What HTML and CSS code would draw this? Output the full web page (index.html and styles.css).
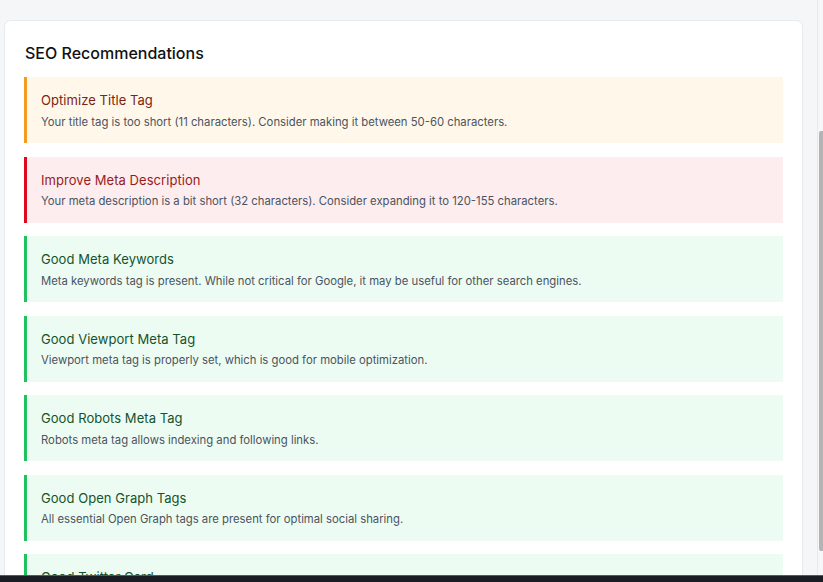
FILE: index.html
```html
<!DOCTYPE html>
<html lang="en">
<head>
<meta charset="utf-8">
<title>SEO Recommendations</title>
<link rel="stylesheet" href="styles.css">
</head>
<body>
<div class="viewport">
  <main class="content">
    <section class="card">
      <h2 class="card-title">SEO Recommendations</h2>
      <div class="list">
        <div class="rec rec-warn">
          <div class="rec-title">Optimize Title Tag</div>
          <div class="rec-text">Your title tag is too short (11 characters). Consider making it between 50-60 characters.</div>
        </div>
        <div class="rec rec-bad">
          <div class="rec-title">Improve Meta Description</div>
          <div class="rec-text">Your meta description is a bit short (32 characters). Consider expanding it to 120-155 characters.</div>
        </div>
        <div class="rec rec-good">
          <div class="rec-title">Good Meta Keywords</div>
          <div class="rec-text">Meta keywords tag is present. While not critical for Google, it may be useful for other search engines.</div>
        </div>
        <div class="rec rec-good">
          <div class="rec-title">Good Viewport Meta Tag</div>
          <div class="rec-text">Viewport meta tag is properly set, which is good for mobile optimization.</div>
        </div>
        <div class="rec rec-good">
          <div class="rec-title">Good Robots Meta Tag</div>
          <div class="rec-text">Robots meta tag allows indexing and following links.</div>
        </div>
        <div class="rec rec-good">
          <div class="rec-title">Good Open Graph Tags</div>
          <div class="rec-text">All essential Open Graph tags are present for optimal social sharing.</div>
        </div>
        <div class="rec rec-good">
          <div class="rec-title">Good Twitter Card</div>
          <div class="rec-text">Twitter Card tags are present for better sharing on Twitter.</div>
        </div>
      </div>
    </section>
  </main>
  <div class="scrollbar"><div class="thumb"></div></div>
</div>
<div class="taskbar"></div>
</body>
</html>
```
FILE: styles.css
```css
* { box-sizing: border-box; }
html, body { margin: 0; height: 100%; overflow: hidden; }
body {
  background: #f4f6f8;
  font-family: Inter, "Noto Sans", sans-serif;
  color: #111;
}
.viewport {
  display: flex;
  height: 582px;
}
.content {
  flex: 1;
  padding: 20px 14px 0 4px;
  overflow: hidden;
}
.card {
  background: #fff;
  border: 1px solid #e8eaed;
  border-radius: 7px;
  padding: 0 19px 20px 19px;
}
.card-title {
  margin: 0;
  padding: 22px 0 14px 1px;
  font-size: 16px;
  line-height: 20px;
  font-weight: 500;
  color: #111;
}
.list {
  display: flex;
  flex-direction: column;
  gap: 13.5px;
}
.rec {
  border-left: 3px solid;
  padding: 13px 14px 12px 14px;
  height: 66px;
}
.rec-title {
  font-size: 13px;
  line-height: 20px;
  font-weight: 400;
  letter-spacing: 0.05px;
}
.rec-text {
  margin-top: 2.5px;
  font-size: 11.3px;
  line-height: 18px;
  color: #4b5360;
}
.rec-warn { background: #fff8ea; border-color: #f29b1e; }
.rec-warn .rec-title { color: #7c2410; }
.rec-bad { background: #fdedee; border-color: #dc0a1e; }
.rec-bad .rec-title { color: #981b1b; }
.rec-good { background: #edfcf2; border-color: #1fc25c; }
.rec-good .rec-title { color: #14532d; }
.scrollbar {
  width: 6px;
  border-left: 1px solid #e6e8ea;
  background: #f6f7f8;
  padding-top: 131px;
  display: flex;
  justify-content: flex-end;
}
.thumb {
  width: 4px;
  height: 420px;
  background: #b4b4b4;
  border-radius: 2px 0 0 2px;
}
.taskbar {
  position: fixed;
  left: 0;
  right: 0;
  bottom: 0;
  height: 7px;
  background: #1a1d24;
  border-top: 1px solid #555a62;
}
```
